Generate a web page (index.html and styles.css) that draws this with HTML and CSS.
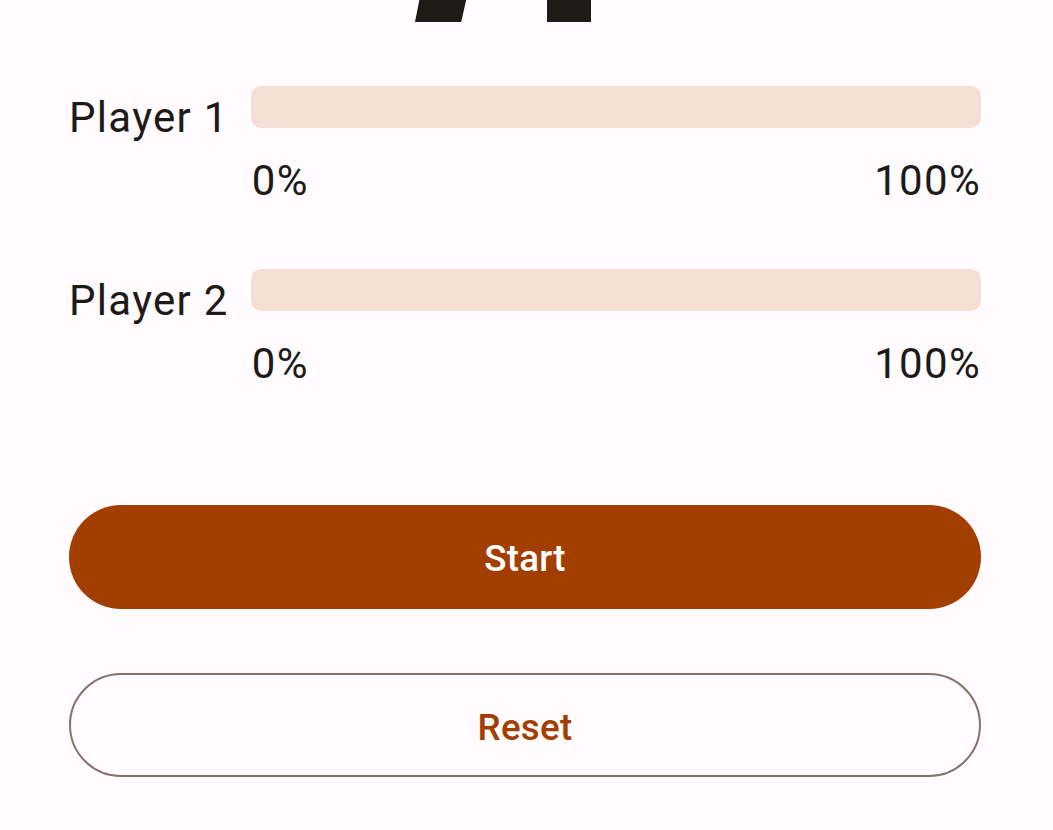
FILE: index.html
```html
<!DOCTYPE html>
<html lang="en">
<head>
<meta charset="utf-8">
<title>Race Tracker</title>
<link rel="stylesheet" href="styles.css">
</head>
<body>
<main class="screen">
  <svg class="hero-icon" viewBox="0 0 24 24" aria-hidden="true">
    <path d="M13.5 5.5c1.1 0 2-.9 2-2s-.9-2-2-2-2 .9-2 2 .9 2 2 2zM9.8 8.9L7 23h2.1l1.8-8 2.1 2v6h2v-7.5l-2.1-2 .6-3C14.8 12 16.8 13 19 13v-2c-1.9 0-3.5-1-4.3-2.4l-1-1.6c-.4-.6-1-1-1.7-1-.3 0-.5.1-.8.1L6 8.3V13h2V9.6l1.8-.7"/>
  </svg>

  <section class="players">
    <div class="player">
      <span class="player-name">Player 1</span>
      <div class="player-status">
        <div class="track"></div>
        <div class="scale"><span>0%</span><span>100%</span></div>
      </div>
    </div>
    <div class="player">
      <span class="player-name">Player 2</span>
      <div class="player-status">
        <div class="track"></div>
        <div class="scale"><span>0%</span><span>100%</span></div>
      </div>
    </div>
  </section>

  <section class="actions">
    <button class="btn btn-filled" type="button">Start</button>
    <button class="btn btn-outlined" type="button">Reset</button>
  </section>
</main>
</body>
</html>
```
FILE: styles.css
```css
html, body {
  margin: 0;
  padding: 0;
  background: #fffbff;
}

body {
  font-family: Roboto, "Liberation Sans", sans-serif;
  color: #201a17;
  overflow: hidden;
}

.screen {
  width: 1053px;
  height: 830px;
  box-sizing: border-box;
  padding: 0 72px 0 69px;
  display: flex;
  flex-direction: column;
}

.hero-icon {
  width: 528px;
  height: 528px;
  margin-top: -484px;
  align-self: center;
  fill: #201a17;
  flex: none;
}

.players {
  margin-top: 42px;
  display: flex;
  flex-direction: column;
  gap: 57px;
}

.player {
  display: flex;
  align-items: flex-start;
}

.player-name {
  font-size: 42px;
  line-height: 63px;
  letter-spacing: 1.3px;
  margin-right: 22px;
  white-space: nowrap;
}

.player-status {
  flex: 1;
  display: flex;
  flex-direction: column;
  gap: 21px;
}

.track {
  height: 42px;
  border-radius: 10.5px;
  background: #f5ded4;
}

.scale {
  display: flex;
  justify-content: space-between;
  font-size: 42px;
  line-height: 63px;
  letter-spacing: 1.3px;
  padding-left: 1px;
}

.actions {
  margin-top: 110px;
  display: flex;
  flex-direction: column;
  gap: 64px;
}

.btn {
  height: 104px;
  border-radius: 52px;
  padding: 2px 0 0;
  font-family: Roboto, "Liberation Sans", sans-serif;
  font-size: 36.75px;
  font-weight: 500;
  letter-spacing: 0.26px;
  cursor: pointer;
}

.btn-filled {
  background: #a23f00;
  color: #ffffff;
  border: none;
}

.btn-outlined {
  background: transparent;
  color: #a23f00;
  border: 2.75px solid #85736b;
  padding-top: 4px;
}
```
